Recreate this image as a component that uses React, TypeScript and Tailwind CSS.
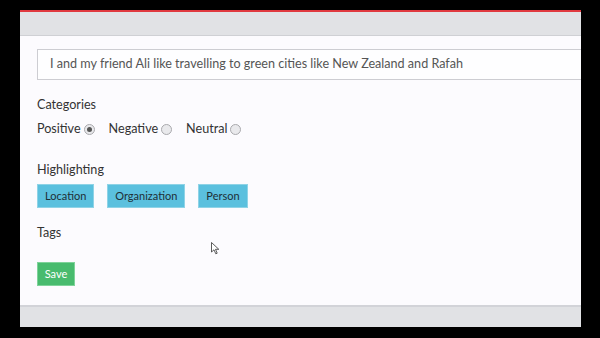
import React from 'react';

const Radio: React.FC<{ checked?: boolean }> = ({ checked }) => (
  <span className="ml-[3px] inline-flex h-[11px] w-[11px] items-center justify-center rounded-full border border-[#a9a9ad] bg-[#e9e9ec]">
    {checked && <span className="h-[5px] w-[5px] rounded-full bg-[#555]" />}
  </span>
);

const HighlightButton: React.FC<{ label: string }> = ({ label }) => (
  <button className="h-[24px] border border-[#8fd3e6] bg-[#5bc0de] px-[7px] text-[11px] text-[#1f2f36]">
    {label}
  </button>
);

export default function App() {
  return (
    <div className="relative h-[338px] w-[600px] overflow-hidden bg-black font-['Lato',sans-serif] text-[#333]">
      <div className="ml-[20px] mt-[10px] flex h-[317px] w-[561px] flex-col overflow-hidden border-t-2 border-[#e0393f] bg-[#fcfbfe]">
        {/* Top bar */}
        <div className="h-[24px] shrink-0 border-b border-[#cfd0d4] bg-[#e1e2e5]" />

        {/* Body */}
        <div className="flex-1 pl-[17px] pt-[13px]">
          <div className="flex h-[31px] w-[600px] items-center border border-[#cdcdd2] bg-[#fefeff] pl-[12px] text-[12.6px] text-[#555]">
            I and my friend Ali like travelling to green cities like New Zealand and Rafah
          </div>

          <div className="mt-[16px] text-[12.6px] leading-[18px]">Categories</div>
          <div className="mt-[6px] flex items-center text-[12.6px] leading-[18px]">
            <span>Positive</span>
            <Radio checked />
            <span className="ml-[14px]">Negative</span>
            <Radio />
            <span className="ml-[14px]">Neutral</span>
            <Radio />
          </div>

          <div className="mt-[23px] text-[12.6px] leading-[18px]">Highlighting</div>
          <div className="mt-[5px] flex gap-[13px]">
            <HighlightButton label="Location" />
            <HighlightButton label="Organization" />
            <HighlightButton label="Person" />
          </div>

          <div className="mt-[16px] text-[12.6px] leading-[18px]">Tags</div>

          <button className="mt-[20px] h-[24px] w-[38px] border border-[#7fd39a] bg-[#48bb6e] text-[11px] text-white">
            Save
          </button>
        </div>

        {/* Bottom bar */}
        <div className="h-[22px] shrink-0 border-t-2 border-[#d2d3d8] bg-[#e1e2e5]" />
      </div>

      {/* Mouse cursor */}
      <svg className="absolute left-[211px] top-[242px]" width="9" height="13" viewBox="0 0 9 13">
        <path d="M0.5 0.5 L0.5 10 L3 7.8 L4.8 11.8 L6.2 11.2 L4.5 7.3 L7.8 7.3 Z" fill="#fff" stroke="#333" strokeWidth="0.8" />
      </svg>
    </div>
  );
}
